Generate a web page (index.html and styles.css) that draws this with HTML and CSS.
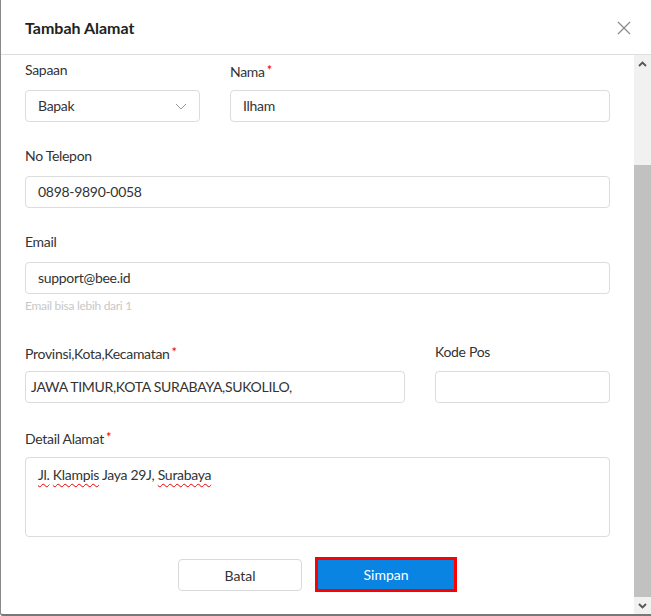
FILE: index.html
```html
<!DOCTYPE html>
<html>
<head>
<meta charset="utf-8">
<link rel="stylesheet" href="styles.css">
</head>
<body>
<div class="modal">
  <div class="header">
    <h1 class="title">Tambah Alamat</h1>
    <svg class="close" width="14" height="14" viewBox="0 0 14 14"><path d="M1 1 L13 13 M13 1 L1 13" stroke="#8a8a8a" stroke-width="1.2" fill="none"/></svg>
  </div>
  <div class="body">
    <div class="content">
      <div class="row row-a">
        <div class="field">
          <div class="label">Sapaan</div>
          <div class="input select">Bapak
            <svg class="chev" width="12" height="7" viewBox="0 0 12 7"><path d="M1 1 L6 6 L11 1" stroke="#999" stroke-width="1" fill="none"/></svg>
          </div>
        </div>
        <div class="field">
          <div class="label">Nama<span class="req">*</span></div>
          <div class="input">Ilham</div>
        </div>
      </div>
      <div class="field gap">
        <div class="label">No Telepon</div>
        <div class="input">0898-9890-0058</div>
      </div>
      <div class="field gap">
        <div class="label">Email</div>
        <div class="input">support@bee.id</div>
        <div class="hint">Email bisa lebih dari 1</div>
      </div>
      <div class="row row-b">
        <div class="field">
          <div class="label">Provinsi,Kota,Kecamatan<span class="req">*</span></div>
          <div class="input tight">JAWA TIMUR,KOTA SURABAYA,SUKOLILO,</div>
        </div>
        <div class="field">
          <div class="label">Kode Pos</div>
          <div class="input"></div>
        </div>
      </div>
      <div class="field gap">
        <div class="label">Detail Alamat<span class="req">*</span></div>
        <div class="input area"><span class="sp">Jl.</span> <span class="sp">Klampis</span> Jaya 29J, <span class="sp">Surabaya</span></div>
      </div>
      <div class="actions">
        <button class="btn cancel">Batal</button>
        <button class="btn save">Simpan</button>
      </div>
    </div>
    <div class="scrollbar">
      <div class="arrow up"><svg width="9" height="6" viewBox="0 0 9 6"><path d="M1 5 L4.5 1.5 L8 5" stroke="#555" stroke-width="1.8" fill="none"/></svg></div>
      <div class="track"></div>
      <div class="thumb"></div>
      <div class="arrow down"><svg width="9" height="6" viewBox="0 0 9 6"><path d="M1 1 L4.5 4.5 L8 1" stroke="#555" stroke-width="1.8" fill="none"/></svg></div>
    </div>
  </div>
</div>
</body>
</html>
```
FILE: styles.css
```css
* { box-sizing: border-box; }
html, body { margin: 0; padding: 0; background: #fff; }
body { font-family: Lato, "Liberation Sans", sans-serif; color: #333; font-size: 14px; letter-spacing: -0.3px; }
.modal {
  width: 651px; height: 616px;
  border-left: 1px solid #8a8a8a;
  border-bottom: 2px solid #777;
  border-bottom-left-radius: 3px;
  display: flex; flex-direction: column;
  overflow: hidden;
}
.header {
  height: 55px; flex: none;
  border-bottom: 1px solid #dedede;
  display: flex; align-items: center; justify-content: space-between;
  padding: 0 20px 0 24px;
}
.title { margin: 0; font-size: 16px; font-weight: 700; color: #222; letter-spacing: 0; }
.close { margin-top: 1px; }
.body { flex: 1; display: flex; min-height: 0; }
.content { flex: 1; padding: 5px 24px 0 24px; }
.row { display: grid; column-gap: 30px; }
.row-a { grid-template-columns: 175px 1fr; }
.row-b { grid-template-columns: 380px 1fr; margin-top: 29px; }
.field.gap { margin-top: 24px; }
.label { height: 20px; line-height: 20px; margin-bottom: 10px; color: #333; }
.row-b .label { margin-bottom: 9px; }
.req { color: #e00; margin-left: 2px; font-size: 13px; vertical-align: 2px; }
.input {
  height: 32px; border: 1px solid #dcdcdc; border-radius: 4px;
  padding: 0 12px; line-height: 30px; color: #333; position: relative;
}
.input.tight { padding-left: 5px; }
.select .chev { position: absolute; right: 12px; top: 12px; }
.hint { font-size: 12px; color: #c8c8c8; margin-top: 5px; line-height: 14px; }
.area { height: 80px; line-height: 20px; padding-top: 7px; }
.sp { text-decoration: underline wavy #e00; text-decoration-thickness: 1.2px; text-underline-offset: 3px; }
.actions { display: flex; justify-content: center; gap: 13px; margin-top: 20px; }
.btn { font-family: inherit; font-size: 14px; height: 32px; border-radius: 4px; cursor: pointer; letter-spacing: 0; }
.cancel { width: 124px; background: #fff; border: 1px solid #d9d9d9; color: #333; margin-top: 2px; }
.save { width: 142px; height: 35px; background: #0984e3; color: #fff; border: 3px solid #f00; border-radius: 0; }
.scrollbar { width: 17px; flex: none; display: flex; flex-direction: column; background: #f1f1f1; }
.arrow { height: 17px; display: flex; align-items: center; justify-content: center; flex: none; }
.track { height: 93px; flex: none; }
.thumb { flex: 1; background: #c1c1c1; }
```
